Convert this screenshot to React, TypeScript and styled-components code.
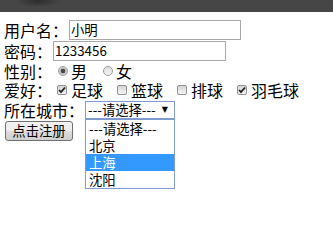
import styled, { createGlobalStyle } from 'styled-components';

const GlobalStyle = createGlobalStyle`
  html, body {
    margin: 0;
    padding: 0;
    background: #fff;
  }
  body {
    min-height: 200px;
    font-family: "Noto Sans CJK SC", "Liberation Sans", sans-serif;
    color: #000;
  }
`;

const hobbies = [
  { name: '足球', checked: true },
  { name: '篮球', checked: false },
  { name: '排球', checked: false },
  { name: '羽毛球', checked: true },
];

const cities = ['---请选择---', '北京', '上海', '沈阳'];

export default function App() {
  return (
    <>
      <GlobalStyle />
      <TopBar />
      <Form>
        <Row h={21}>
          <Label>用户名：</Label>
          <TextInput defaultValue="小明" />
        </Row>
        <Row h={21}>
          <Label>密码：</Label>
          <TextInput width={173} defaultValue="1233456" />
        </Row>
        <Row h={19}>
          <Label>性别：</Label>
          <Radio checked />
          <OptionText>男</OptionText>
          <Radio />
          <OptionText>女</OptionText>
        </Row>
        <Row h={19}>
          <Label>爱好：</Label>
          {hobbies.map((h) => (
            <CheckItem key={h.name}>
              <CheckBox>
                {h.checked && (
                  <svg width="8" height="8" viewBox="0 0 8 8">
                    <path d="M1 4 L3 6.2 L7 1.5" fill="none" stroke="#222" strokeWidth="1.8" />
                  </svg>
                )}
              </CheckBox>
              <OptionText>{h.name}</OptionText>
            </CheckItem>
          ))}
        </Row>
        <Row h={21}>
          <Label>所在城市：</Label>
          <SelectWrap>
            <SelectBox>
              <span>---请选择---</span>
              <Arrow>▼</Arrow>
            </SelectBox>
            <Dropdown>
              {cities.map((c) => (
                <DropItem key={c} active={c === '上海'}>
                  {c}
                </DropItem>
              ))}
            </Dropdown>
          </SelectWrap>
        </Row>
        <Row h={22}>
          <SubmitButton type="button">点击注册</SubmitButton>
        </Row>
      </Form>
    </>
  );
}

const TopBar = styled.div`
  height: 12px;
  background: radial-gradient(ellipse 22px 6px at 38px 1px, #2c2c2c, rgba(44, 44, 44, 0)), #464646;
`;

const Form = styled.form`
  min-height: 180px;
  padding: 7px 0 0 4px;
  font-size: 16px;
`;

const Row = styled.div<{ h: number }>`
  display: flex;
  align-items: center;
  height: ${(props) => props.h}px;
  line-height: 18px;
  white-space: nowrap;
`;

const Label = styled.span`
  font-size: 16px;
`;

const TextInput = styled.input<{ width?: number }>`
  box-sizing: border-box;
  width: ${(props) => props.width || 172}px;
  height: 20px;
  margin: 0 0 0 1px;
  padding: 0 1px;
  border: 1px solid #a9a9a9;
  font-family: "Noto Sans CJK SC", "Liberation Sans", sans-serif;
  font-size: 13.33px;
  color: #000;
  outline: none;
`;

const Radio = styled.span<{ checked?: boolean }>`
  box-sizing: border-box;
  display: inline-block;
  width: 10px;
  height: 10px;
  margin: 1px 3px 0 6px;
  border: 1px solid #9a9a9a;
  border-radius: 50%;
  background: ${(props) =>
    props.checked
      ? 'radial-gradient(circle at center, #4a4a4a 0 2px, #bdbdbd 2.6px, #ececec 5px)'
      : 'linear-gradient(#dedede, #f6f6f6)'};
  & + span {
    margin-right: 10px;
  }
`;

const OptionText = styled.span`
  font-size: 16px;
`;

const CheckItem = styled.span`
  display: inline-flex;
  align-items: center;
  margin-right: 9px;
`;

const CheckBox = styled.span`
  box-sizing: border-box;
  display: inline-flex;
  align-items: center;
  justify-content: center;
  width: 10px;
  height: 10px;
  margin: 1px 4px 0 5px;
  border: 1px solid #929292;
  border-radius: 2px;
  background: linear-gradient(#d6d6d6, #f4f4f4);
`;

const SelectWrap = styled.div`
  position: relative;
  margin-left: 1px;
`;

const SelectBox = styled.div`
  box-sizing: border-box;
  display: flex;
  align-items: center;
  justify-content: space-between;
  width: 90px;
  height: 18px;
  padding: 0 6px 0 2px;
  border: 1px solid #7f9ad0;
  font-size: 13.33px;
  line-height: 16px;
`;

const Arrow = styled.span`
  font-size: 8px;
  line-height: 8px;
  font-family: "DejaVu Sans", sans-serif;
`;

const Dropdown = styled.div`
  position: absolute;
  top: 100%;
  left: 0;
  z-index: 5;
  box-sizing: border-box;
  width: 90px;
  border: 1px solid #7f9ad0;
  background: #fff;
`;

const DropItem = styled.div<{ active?: boolean }>`
  height: 17px;
  padding-left: 3px;
  font-size: 13.33px;
  line-height: 17px;
  background: ${(props) => (props.active ? '#3399ff' : '#fff')};
  color: ${(props) => (props.active ? '#fff' : '#000')};
`;

const SubmitButton = styled.button`
  box-sizing: border-box;
  width: 68px;
  height: 20px;
  margin-left: 1px;
  padding: 0;
  border: 1px solid #707070;
  border-radius: 3px;
  background: linear-gradient(#f2f2f2, #ebebeb 50%, #dddddd 50%, #cfcfcf);
  font-family: "Noto Sans CJK SC", "Liberation Sans", sans-serif;
  font-size: 13.33px;
  line-height: 16px;
  color: #000;
`;
